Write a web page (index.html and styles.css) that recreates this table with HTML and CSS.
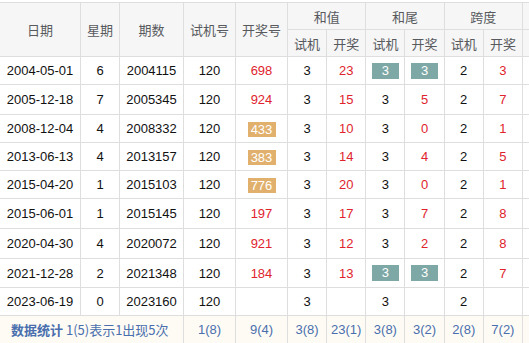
FILE: index.html
```html
<!DOCTYPE html>
<html lang="zh-CN">
<head>
    <meta charset="UTF-8">
    <title>试机号历史</title>
    <link rel="stylesheet" href="styles.css">
</head>
<body>
    <table class="history">
        <thead>
            <tr>
                <th rowspan="2" class="c-date">日期</th>
                <th rowspan="2" class="c-week">星期</th>
                <th rowspan="2" class="c-issue">期数</th>
                <th rowspan="2" class="c-test">试机号</th>
                <th rowspan="2" class="c-open">开奖号</th>
                <th colspan="2">和值</th>
                <th colspan="2">和尾</th>
                <th colspan="2">跨度</th>
                <th class="c-more"></th>
            </tr>
            <tr>
                <th class="c-sum1">试机</th>
                <th class="c-sum2">开奖</th>
                <th class="c-tail1">试机</th>
                <th class="c-tail2">开奖</th>
                <th class="c-span1">试机</th>
                <th class="c-span2">开奖</th>
                <th></th>
            </tr>
        </thead>
        <tbody>
            <tr>
                <td>2004-05-01</td><td>6</td><td>2004115</td><td>120</td>
                <td class="red">698</td>
                <td>3</td><td class="red">23</td>
                <td><span class="badge teal">3</span></td><td><span class="badge teal">3</span></td>
                <td>2</td><td class="red">3</td><td></td>
            </tr>
            <tr class="tall">
                <td>2005-12-18</td><td>7</td><td>2005345</td><td>120</td>
                <td class="red">924</td>
                <td>3</td><td class="red">15</td>
                <td>3</td><td class="red">5</td>
                <td>2</td><td class="red">7</td><td></td>
            </tr>
            <tr>
                <td>2008-12-04</td><td>4</td><td>2008332</td><td>120</td>
                <td><span class="badge gold">433</span></td>
                <td>3</td><td class="red">10</td>
                <td>3</td><td class="red">0</td>
                <td>2</td><td class="red">1</td><td></td>
            </tr>
            <tr>
                <td>2013-06-13</td><td>4</td><td>2013157</td><td>120</td>
                <td><span class="badge gold">383</span></td>
                <td>3</td><td class="red">14</td>
                <td>3</td><td class="red">4</td>
                <td>2</td><td class="red">5</td><td></td>
            </tr>
            <tr>
                <td>2015-04-20</td><td>1</td><td>2015103</td><td>120</td>
                <td><span class="badge gold">776</span></td>
                <td>3</td><td class="red">20</td>
                <td>3</td><td class="red">0</td>
                <td>2</td><td class="red">1</td><td></td>
            </tr>
            <tr class="tall">
                <td>2015-06-01</td><td>1</td><td>2015145</td><td>120</td>
                <td class="red">197</td>
                <td>3</td><td class="red">17</td>
                <td>3</td><td class="red">7</td>
                <td>2</td><td class="red">8</td><td></td>
            </tr>
            <tr class="tall">
                <td>2020-04-30</td><td>4</td><td>2020072</td><td>120</td>
                <td class="red">921</td>
                <td>3</td><td class="red">12</td>
                <td>3</td><td class="red">2</td>
                <td>2</td><td class="red">8</td><td></td>
            </tr>
            <tr class="mid">
                <td>2021-12-28</td><td>2</td><td>2021348</td><td>120</td>
                <td class="red">184</td>
                <td>3</td><td class="red">13</td>
                <td><span class="badge teal">3</span></td><td><span class="badge teal">3</span></td>
                <td>2</td><td class="red">7</td><td></td>
            </tr>
            <tr>
                <td>2023-06-19</td><td>0</td><td>2023160</td><td>120</td>
                <td></td>
                <td>3</td><td></td>
                <td>3</td><td></td>
                <td>2</td><td></td><td></td>
            </tr>
        </tbody>
        <tfoot>
            <tr>
                <td colspan="3" class="summary"><b>数据统计</b> 1(5)表示1出现5次</td>
                <td>1(8)</td>
                <td>9(4)</td>
                <td>3(8)</td>
                <td>23(1)</td>
                <td>3(8)</td>
                <td>3(2)</td>
                <td>2(8)</td>
                <td>7(2)</td>
                <td></td>
            </tr>
        </tfoot>
    </table>
</body>
</html>
```

FILE: styles.css
```css
body {
    margin: 0;
    background: #fff;
    font-family: "Liberation Sans", Arial, "Noto Sans CJK SC", sans-serif;
    font-size: 13px;
    color: #111;
    overflow: hidden;
}

.history {
    border-collapse: collapse;
    table-layout: fixed;
    margin: 2px 0 0 -1px;
    width: 551px;
}

.history th,
.history td {
    border: 1px solid #dedede;
    text-align: center;
    padding: 0;
    white-space: nowrap;
}

/* header */
.history th {
    background: #f6f6f6;
    color: #585a5e;
    font-family: "Noto Sans CJK SC", "Liberation Sans", sans-serif;
    font-weight: normal;
    height: 26px;
}

.c-date { width: 80px; }
.c-week { width: 38px; }
.c-issue { width: 63px; }
.c-test { width: 51px; }
.c-open { width: 51px; }
.c-sum1 { width: 38px; }
.c-sum2 { width: 43px; }
.c-tail1 { width: 39px; }
.c-tail2 { width: 38px; }
.c-span1 { width: 38px; }
.c-span2 { width: 37px; }
.c-more { width: 26px; }

/* body */
.history tbody td {
    height: 27px;
}

.history tbody tr.tall td {
    height: 29px;
}

.history tbody tr.mid td {
    height: 28px;
}

.red {
    color: #e0242e;
}

.badge {
    display: inline-block;
    width: 28px;
    height: 15px;
    line-height: 15px;
    color: #fff;
    vertical-align: middle;
}

.gold {
    background: #e0b06c;
}

.teal {
    background: #7ea8a6;
    height: 16px;
    line-height: 16px;
    width: 27px;
}

/* footer */
.history tfoot td {
    height: 27px;
    background: #fdfbf4;
    color: #4a6fae;
}

.history tfoot td.summary {
    text-align: left;
    padding-left: 11px;
    font-family: "Noto Sans CJK SC", "Liberation Sans", sans-serif;
}

.summary b {
    font-weight: bold;
}
```
